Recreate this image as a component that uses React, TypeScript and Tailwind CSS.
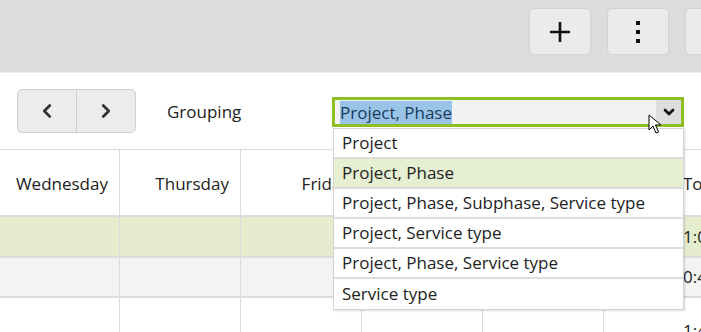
import { ChevronLeft, ChevronRight, ChevronDown } from "lucide-react";

const options = [
    "Project",
    "Project, Phase",
    "Project, Phase, Subphase, Service type",
    "Project, Service type",
    "Project, Phase, Service type",
    "Service type",
];

const days = ["Wednesday", "Thursday", "Friday", "Saturday", "Sunday"];

const rows = [
    { bg: "bg-[#e6edcf]", h: "h-[41px] border-b-2 border-[#dcdcdc]", total: "1:00" },
    { bg: "bg-[#f3f3f3]", h: "h-[40px] border-b-2 border-[#dcdcdc]", total: "0:45" },
    { bg: "bg-white", h: "h-[60px]", total: "1:45" },
];

function ToolButton({ children }: { children: React.ReactNode }) {
    return (
        <div className="w-[62px] h-[47px] shrink-0 rounded-[5px] border border-[#d2d2d2] bg-[#ebebeb] flex items-center justify-center">
            {children}
        </div>
    );
}

export default function App() {
    return (
        <div
            className="relative w-[701px] h-[332px] overflow-hidden bg-white text-[#222] text-[17px]"
            style={{ fontFamily: '"Open Sans", "Noto Sans", sans-serif' }}
        >
            {/* Top bar */}
            <div className="h-[73px] bg-[#dcdcdc] border-b border-[#ececec] flex items-start pt-[8px] pl-[529px] gap-[16px]">
                <ToolButton>
                    <svg width="22" height="22" viewBox="0 0 22 22">
                        <path d="M11 1v20M1 11h20" stroke="#111" strokeWidth="2.6" />
                    </svg>
                </ToolButton>
                <ToolButton>
                    <div className="flex flex-col gap-[5px]">
                        <div className="w-[4px] h-[4px] bg-[#111]" />
                        <div className="w-[4px] h-[4px] bg-[#111]" />
                        <div className="w-[4px] h-[4px] bg-[#111]" />
                    </div>
                </ToolButton>
                <ToolButton>{null}</ToolButton>
            </div>

            {/* Toolbar */}
            <div className="h-[76px] flex items-center pl-[17px]">
                <div className="flex h-[44px] rounded-[5px] border border-[#cfcfcf] bg-[#ececec]">
                    <div className="w-[59px] flex items-center justify-center border-r border-[#cfcfcf]">
                        <ChevronLeft size={22} strokeWidth={3} color="#333" />
                    </div>
                    <div className="w-[58px] flex items-center justify-center">
                        <ChevronRight size={22} strokeWidth={3} color="#333" />
                    </div>
                </div>
                <div className="ml-[31px] w-[165px] mt-[2px]">Grouping</div>

                <div className="relative mt-[2px]">
                    <div className="w-[352px] h-[30px] border-[3px] border-[#8cbf26] bg-[#f2f2f2] flex items-center">
                        <span className="ml-[5px] bg-[#99c4e8] text-[#1c3a58] leading-[23px]">Project, Phase</span>
                        <div className="ml-auto w-[25px] h-[24px] bg-[#dedede] flex items-center justify-center">
                            <ChevronDown size={16} strokeWidth={4} color="#111" />
                        </div>
                    </div>
                    {/* Dropdown list */}
                    <div className="absolute left-[1px] top-[31px] w-[351px] z-10 bg-white border border-[#d3d3d3] shadow-[1px_1px_2px_rgba(0,0,0,0.15)]">
                        {options.map((o, i) => (
                            <div
                                key={o}
                                className={`h-[30px] flex items-center pl-[8px] ${i < options.length - 1 ? "border-b-2 border-[#dcdcdc]" : ""} ${i === 1 ? "bg-[#e6efd2]" : "bg-white"}`}
                            >
                                {o}
                            </div>
                        ))}
                    </div>
                    {/* Mouse pointer */}
                    <svg className="absolute left-[316px] top-[17px] z-20" width="14" height="20" viewBox="0 0 14 20">
                        <path d="M1 1v15l4-4 3 7 2.5-1-3-7h5.5z" fill="#fff" stroke="#000" strokeWidth="1" strokeLinejoin="round" />
                    </svg>
                </div>
            </div>

            {/* Table */}
            <div className="border-t border-[#dcdcdc]">
                <div className="flex h-[67px] border-b-2 border-[#dcdcdc]">
                    {days.map((d, i) => (
                        <div
                            key={d}
                            className={`${i === 0 ? "w-[120px]" : "w-[121px]"} shrink-0 border-r border-[#dcdcdc] flex items-center justify-end pr-[11px] pt-[2px]`}
                        >
                            {d}
                        </div>
                    ))}
                    <div className="w-[130px] shrink-0 flex items-center pl-[79px] pt-[2px]">Total</div>
                </div>
                {rows.map((r, ri) => (
                    <div key={ri} className={`flex ${r.h} ${r.bg}`}>
                        {days.map((d, i) => (
                            <div
                                key={d}
                                className={`${i === 0 ? "w-[120px]" : "w-[121px]"} shrink-0 border-r border-[#dcdcdc]`}
                            />
                        ))}
                        <div className={`w-[130px] shrink-0 flex pl-[79px] ${ri === 2 ? "items-start pt-[20px]" : "items-center"}`}>
                            {r.total}
                        </div>
                    </div>
                ))}
            </div>
        </div>
    );
}
